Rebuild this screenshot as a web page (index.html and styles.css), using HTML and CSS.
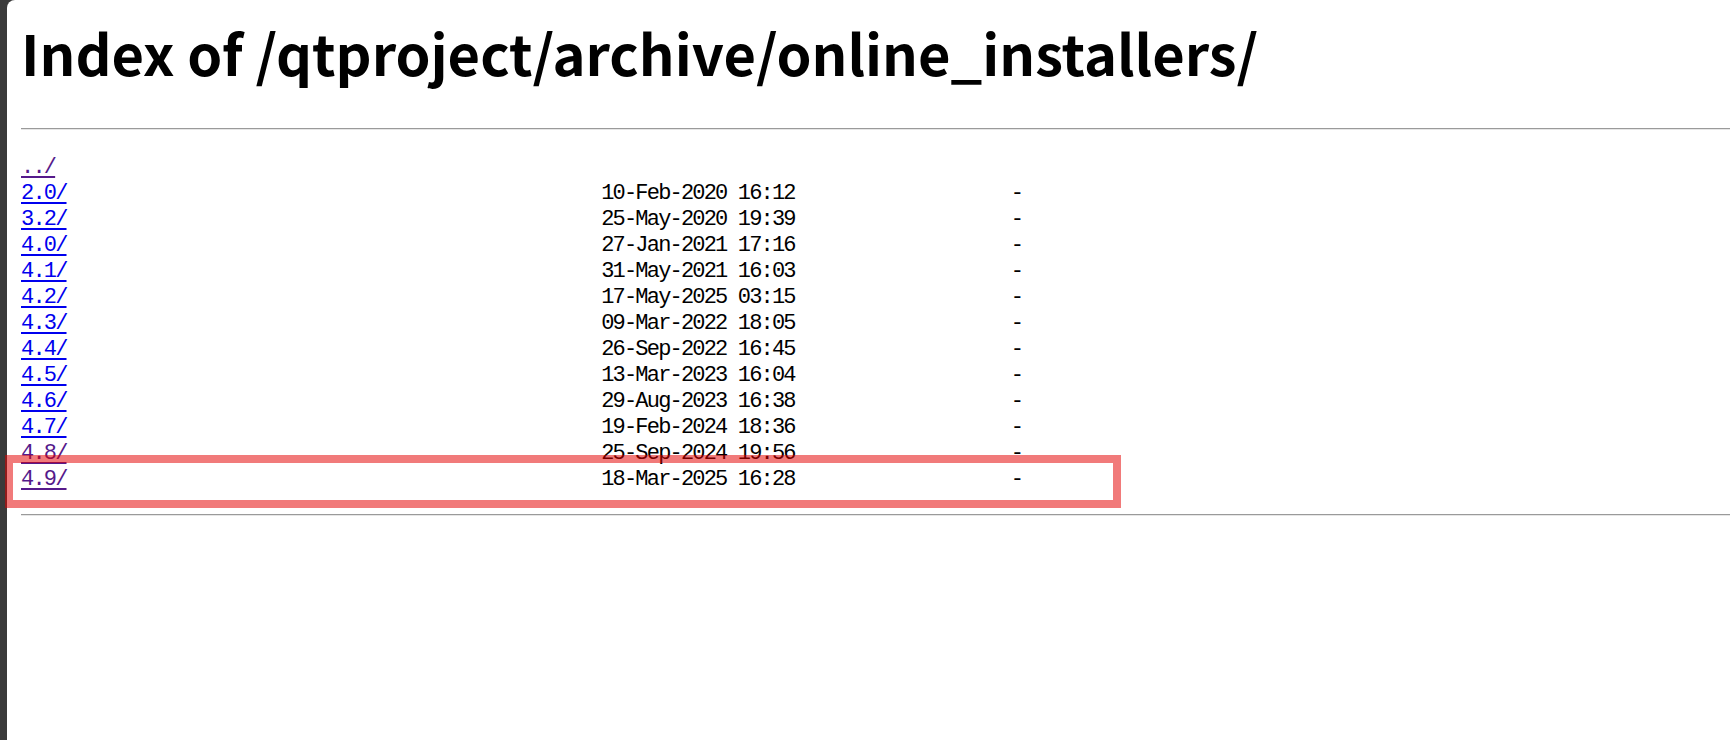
FILE: index.html
```html
<!DOCTYPE html>
<html>
<head>
<meta charset="utf-8">
<title>Index of /qtproject/archive/online_installers/</title>
<link rel="stylesheet" href="styles.css">
</head>
<body>
<div class="page">
<h1 class="title">Index of /qtproject/archive/online_installers/</h1>
<hr class="rule rule-top">
<pre class="listing"><a class="visited" href="#">../</a>
<a href="#">2.0/</a>                                               10-Feb-2020 16:12                   -
<a href="#">3.2/</a>                                               25-May-2020 19:39                   -
<a href="#">4.0/</a>                                               27-Jan-2021 17:16                   -
<a href="#">4.1/</a>                                               31-May-2021 16:03                   -
<a href="#">4.2/</a>                                               17-May-2025 03:15                   -
<a href="#">4.3/</a>                                               09-Mar-2022 18:05                   -
<a href="#">4.4/</a>                                               26-Sep-2022 16:45                   -
<a href="#">4.5/</a>                                               13-Mar-2023 16:04                   -
<a href="#">4.6/</a>                                               29-Aug-2023 16:38                   -
<a href="#">4.7/</a>                                               19-Feb-2024 18:36                   -
<a class="visited" href="#">4.8/</a>                                               25-Sep-2024 19:56                   -
<a class="visited" href="#">4.9/</a>                                               18-Mar-2025 16:28                   -</pre>
<hr class="rule rule-bottom">
<div class="highlight"></div>
</div>
</body>
</html>
```

FILE: styles.css
```css
html, body {
  margin: 0;
  padding: 0;
}

body {
  background: #3a3a3a;
  height: 740px;
  overflow: hidden;
}

.page {
  position: relative;
  margin-left: 7px;
  height: 740px;
  background: #ffffff;
  border-top-left-radius: 8px;
  padding-left: 14px;
  box-sizing: border-box;
}

.title {
  margin: 0;
  padding-top: 24px;
  font-family: "Noto Sans CJK SC", "Noto Sans", sans-serif;
  font-weight: 700;
  font-size: 56px;
  line-height: 56px;
  color: #000;
}

.rule {
  border: 0;
  height: 0;
  margin: 0;
  border-top: 1px solid #9a9a9a;
  border-bottom: 1px solid #e6e6e6;
}

.rule-top {
  margin-top: 48px;
}

.rule-bottom {
  margin-top: 21px;
}

.listing {
  margin: 25px 0 0;
  font-family: "Liberation Mono", monospace;
  font-size: 22px;
  letter-spacing: -1.825px;
  line-height: 26px;
  color: #000;
}

.listing a {
  color: #0000ee;
  text-decoration: underline;
  text-decoration-thickness: 2px;
  text-underline-offset: 3px;
}

.listing a.visited {
  color: #551a8b;
}

.highlight {
  position: absolute;
  left: -2px;
  top: 455px;
  width: 1116px;
  height: 53px;
  box-sizing: border-box;
  border: 8px solid rgba(228, 0, 0, 0.52);
}
```
